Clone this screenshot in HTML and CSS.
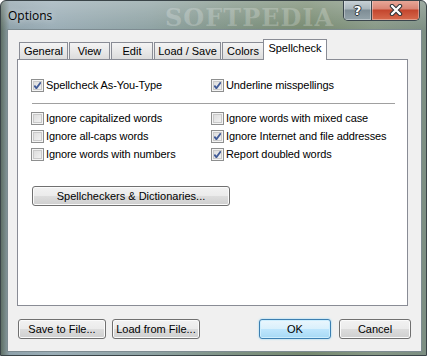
FILE: index.html
```
<!DOCTYPE html>
<html lang="en">
<head>
    <meta charset="UTF-8" />
    <link rel="stylesheet" href="styles.css">
</head>
<body>

    <div class="window">
        <div class="titlebar">
            <span class="title">Options</span>
            <div class="caption">
                <span class="cap-btn help">?</span>
                <span class="cap-btn close">
                    <svg width="14" height="12" viewBox="0 0 14 12">
                        <path d="M3 2 L11 10 M11 2 L3 10" stroke="#2c3438" stroke-width="4.4" stroke-linecap="round" fill="none" />
                        <path d="M3 2 L11 10 M11 2 L3 10" stroke="#fff" stroke-width="2.4" stroke-linecap="round" fill="none" />
                    </svg>
                </span>
            </div>
            <span class="mark">SOFTPEDIA</span>
        </div>

        <div class="client">
            <div class="tabs">
                <span class="tab t-general">General</span>
                <span class="tab t-view">View</span>
                <span class="tab t-edit">Edit</span>
                <span class="tab t-load">Load / Save</span>
                <span class="tab t-colors">Colors</span>
                <span class="tab active">Spellcheck</span>
            </div>

            <div class="panel">
                <div class="grid">
                    <label class="check on"><span class="box"></span>Spellcheck As-You-Type</label>
                    <label class="check on"><span class="box"></span>Underline misspellings</label>
                </div>
                <div class="sep"></div>
                <div class="grid">
                    <label class="check"><span class="box"></span>Ignore capitalized words</label>
                    <label class="check"><span class="box"></span>Ignore words with mixed case</label>
                    <label class="check"><span class="box"></span>Ignore all-caps words</label>
                    <label class="check on"><span class="box"></span>Ignore Internet and file addresses</label>
                    <label class="check"><span class="box"></span>Ignore words with numbers</label>
                    <label class="check on"><span class="box"></span>Report doubled words</label>
                </div>
                <button class="btn dict">Spellcheckers &amp; Dictionaries...</button>
            </div>

            <div class="footer">
                <button class="btn wide">Save to File...</button>
                <button class="btn wide">Load from File...</button>
                <span class="spacer"></span>
                <button class="btn small default">OK</button>
                <button class="btn small">Cancel</button>
            </div>
        </div>
    </div>

</body>
</html>
```

FILE: styles.css
```
html,
body {
    padding: 0;
    margin: 0;
    height: 100%;
}
body {
    font-family: "Liberation Sans", Arial, sans-serif;
    font-size: 11px;
    color: #000;
}
.window {
    width: 427px;
    height: 356px;
    box-sizing: border-box;
    border: 1px solid #3a4448;
    border-radius: 6px 6px 0 0;
    background:
        linear-gradient(180deg, rgba(255,255,255,0.25) 0, rgba(255,255,255,0) 30px),
        linear-gradient(90deg, #5f7066 0, #8fa2ab 2%, #9aadb6 12%, #8ea2a3 35%, #7e9283 55%, #76896f 72%, #869785 88%, #7c8e82 100%);
    overflow: hidden;
    position: relative;
}
.titlebar {
    height: 28px;
    display: flex;
    align-items: flex-start;
    padding: 0 6px 0 7px;
}
.title {
    font-family: "Open Sans", "Liberation Sans", sans-serif;
    font-size: 12px;
    margin-top: 6px;
    color: #000;
    text-shadow: 0 0 6px rgba(255,255,255,0.7);
}
.caption {
    margin-left: auto;
    display: flex;
    margin-top: -1px;
    border: 1px solid #39454c;
    border-top: none;
    border-radius: 0 0 5px 5px;
    overflow: hidden;
    height: 20px;
}
.cap-btn {
    display: flex;
    align-items: center;
    justify-content: center;
    height: 20px;
    box-shadow: inset 0 0 0 1px rgba(255,255,255,0.35);
}
.help {
    width: 27px;
    border-right: 1px solid #39454c;
    background: linear-gradient(#cbd4d8 0%, #a9b6bc 45%, #7e8d95 50%, #94a3aa 100%);
    font-family: "DejaVu Sans", sans-serif;
    font-weight: bold;
    font-size: 13px;
    color: #fff;
    text-shadow: 1px 0 #2c3438, -1px 0 #2c3438, 0 1px #2c3438, 0 -1px #2c3438;
}
.close {
    width: 47px;
    background: linear-gradient(#e9ab9c 0%, #d98574 45%, #c3452d 50%, #d76a4d 100%);
}
.mark {
    position: absolute;
    left: 164px;
    top: 2px;
    font-family: "DejaVu Serif", serif;
    font-weight: bold;
    font-size: 24px;
    letter-spacing: 1px;
    color: rgba(255,255,255,0.22);
    pointer-events: none;
}
.client {
    width: 415px;
    height: 323px;
    box-sizing: border-box;
    margin-left: 6px;
    background: #f0f0f0;
    border: 1px solid #7d8b91;
    padding: 9px 0 0 9px;
}
.tabs {
    display: flex;
    align-items: flex-end;
    height: 20px;
    margin-left: 2px;
}
.tab {
    height: 17px;
    box-sizing: border-box;
    border: 1px solid #898c95;
    border-bottom: none;
    background: linear-gradient(#f4f4f4, #e6e6e6 60%, #dcdcdc);
    margin-right: 1px;
    text-align: center;
    line-height: 17px;
    font-size: 11px;
}
.t-general { width: 49px; }
.t-view { width: 41px; }
.t-edit { width: 42px; }
.t-load { width: 67px; }
.t-colors { width: 42px; }
.tab.active {
    width: 64px;
    height: 21px;
    margin-left: -2px;
    margin-bottom: -1px;
    background: #fff;
    line-height: 16px;
    position: relative;
    z-index: 1;
}
.panel {
    width: 391px;
    height: 247px;
    box-sizing: border-box;
    border: 1px solid #898c95;
    background: #fff;
    padding: 16px 0 0 14px;
}
.grid {
    display: grid;
    grid-template-columns: 180px auto;
    grid-auto-rows: 18px;
}
.check {
    display: flex;
    align-items: center;
    letter-spacing: -0.1px;
    white-space: nowrap;
}
.box {
    width: 13px;
    height: 13px;
    box-sizing: border-box;
    border: 1px solid #8e8f8f;
    background: linear-gradient(135deg, #d8d8d8, #f6f6f6);
    box-shadow: inset 0 0 0 1px #f4f4f4, inset 0 0 0 2px #c9c9c9;
    margin-right: 2px;
    margin-left: -1px;
    flex: none;
}
.check.on .box {
    background:
        url("data:image/svg+xml,%3Csvg xmlns='http://www.w3.org/2000/svg' width='11' height='11'%3E%3Cpath d='M2.3 5.6 L4.4 8.2 L8.8 2.2' stroke='%23425c98' stroke-width='1.9' fill='none'/%3E%3C/svg%3E") center no-repeat,
        linear-gradient(135deg, #d8d8d8, #f6f6f6);
}
.sep {
    width: 363px;
    height: 1px;
    background: #a0a0a0;
    margin: 9px 0 5px;
}
.btn {
    font-family: "Liberation Sans", Arial, sans-serif;
    font-size: 11px;
    height: 20px;
    box-sizing: border-box;
    padding: 0;
    border: 1px solid #707070;
    border-radius: 3px;
    background: linear-gradient(#f2f2f2 0%, #ebebeb 49%, #dddddd 50%, #cfcfcf 100%);
    box-shadow: inset 0 0 0 1px #fbfbfb;
    color: #000;
}
.dict {
    display: block;
    width: 198px;
    margin-top: 23px;
}
.footer {
    display: flex;
    width: 393px;
    margin: 13px 0 0 1px;
}
.spacer {
    flex: 1;
}
.wide {
    width: 88px;
    margin-right: 6px;
}
.small {
    width: 72px;
    margin-left: 8px;
}
.default {
    border-color: #3c7fb1;
    background: linear-gradient(#eaf6fd 0%, #d9f0fc 49%, #bee6fd 50%, #a7d9f5 100%);
    box-shadow: inset 0 0 0 1px #cdeefe, 0 0 2px #7fd0f8;
}
```
